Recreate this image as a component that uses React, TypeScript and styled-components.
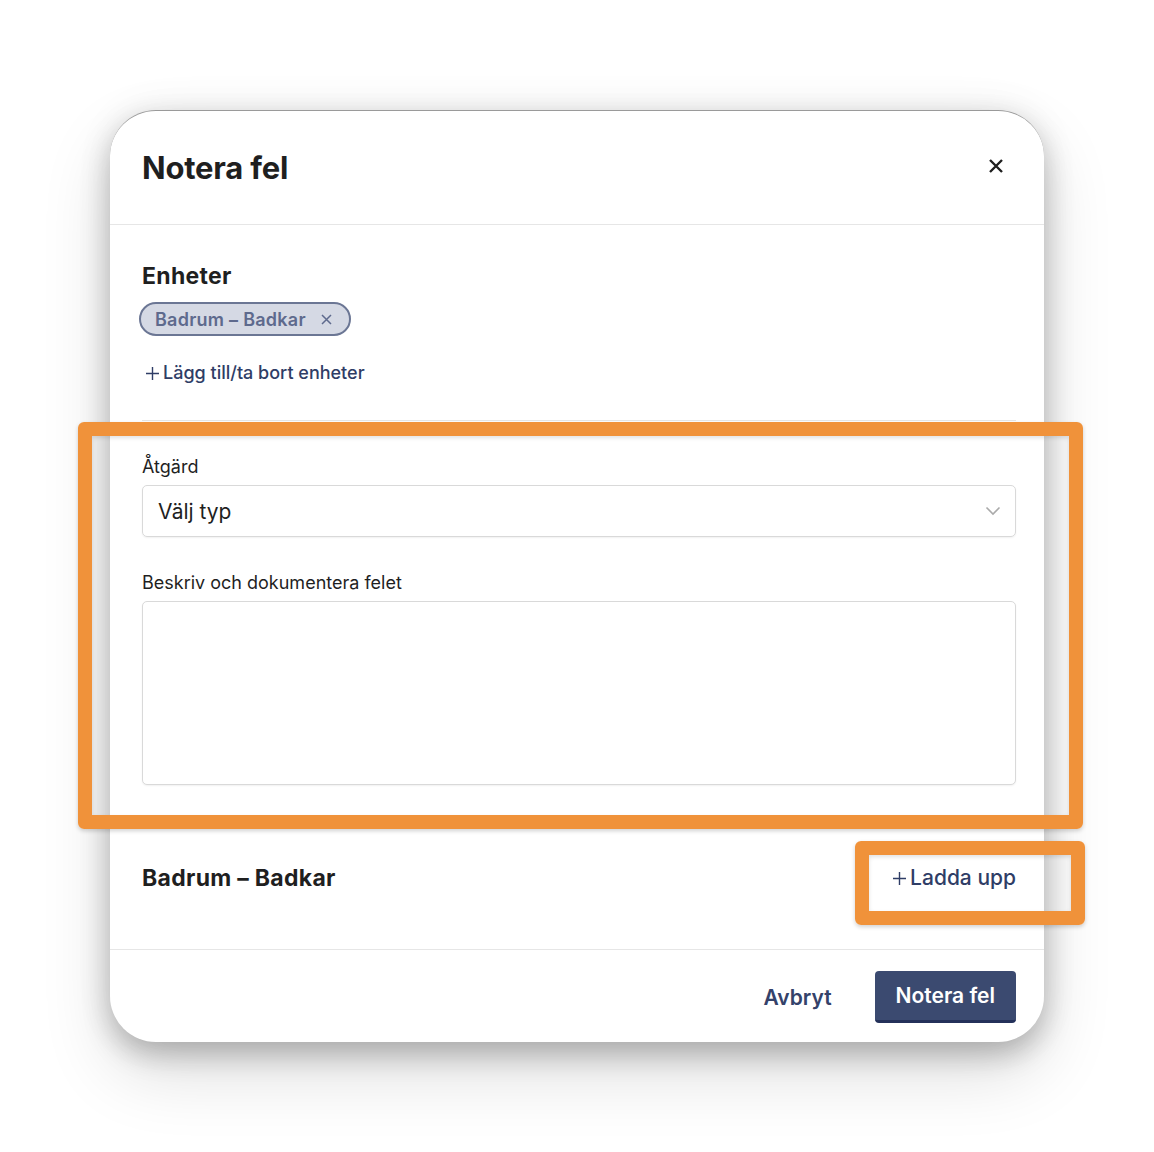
import React from "react";
import styled, { createGlobalStyle } from "styled-components";

const colors = {
  ink: "#1f1f1f",
  navy: "#2f3d66",
  button: "#3b4a70",
  buttonEdge: "#24315a",
  line: "#e6e6e6",
  field: "#d9d9d9",
  orange: "#f0923a",
  chipBg: "#d5d9e4",
  chipInk: "#5e6a8d",
};

const GlobalStyle = createGlobalStyle`
  html, body {
    margin: 0;
    padding: 0;
    background: #ffffff;
  }

  body {
    font-family: Inter, "Noto Sans", "Liberation Sans", sans-serif;
    color: ${colors.ink};
  }

  * {
    box-sizing: border-box;
  }
`;

const Page = styled.div`
  width: 1154px;
  height: 1152px;
  padding: 110px 0 0 110px;
`;

const Modal = styled.div`
  position: relative;
  width: 934px;
  height: 932px;
  background: #ffffff;
  border-top: 1px solid #9a9a9a;
  border-radius: 46px;
  box-shadow: 0 12px 28px rgba(0, 0, 0, 0.22), 0 30px 70px rgba(0, 0, 0, 0.14),
    0 0 40px rgba(0, 0, 0, 0.06);
  display: flex;
  flex-direction: column;
`;

const Header = styled.header`
  display: flex;
  align-items: center;
  justify-content: space-between;
  height: 114px;
  padding: 0 36px 0 32px;
  border-bottom: 1px solid ${colors.line};
`;

const Title = styled.h1`
  margin: 0;
  font-size: 31px;
  line-height: 40px;
  font-weight: 700;
  letter-spacing: -0.2px;
`;

const CloseButton = styled.button`
  display: flex;
  align-items: center;
  justify-content: center;
  width: 24px;
  height: 24px;
  margin-bottom: 4px;
  padding: 0;
  border: none;
  background: transparent;
  color: ${colors.ink};
`;

const Body = styled.div`
  flex: 1;
  padding: 36px 28px 0 32px;
  display: flex;
  flex-direction: column;
`;

const SectionTitle = styled.h2`
  margin: 0;
  font-size: 23px;
  line-height: 30px;
  font-weight: 700;
  letter-spacing: 0.3px;
`;

const ChipRow = styled.div`
  display: flex;
  margin: 11px 0 0 -3px;
`;

const Chip = styled.span`
  display: inline-flex;
  align-items: center;
  gap: 15px;
  height: 34px;
  padding: 0 17px 0 14px;
  border: 2px solid #6b7694;
  border-radius: 17px;
  background: ${colors.chipBg};
  color: ${colors.chipInk};
  font-size: 18px;
  font-weight: 600;
  letter-spacing: 0.25px;
`;

const TextLink = styled.a<{ $size?: number }>`
  display: inline-flex;
  align-items: center;
  gap: 3px;
  color: ${colors.navy};
  font-size: ${(p) => p.$size ?? 18}px;
  font-weight: 500;
  line-height: 24px;
  text-decoration: none;
  cursor: pointer;
`;

const LinkRow = styled.div`
  margin: 25px 0 0 3px;
`;

const Divider = styled.hr`
  margin: 35px 0 0;
  border: none;
  border-top: 1px solid ${colors.line};
`;

const Label = styled.label<{ $top: number }>`
  display: block;
  margin-top: ${(p) => p.$top}px;
  font-size: 18px;
  line-height: 24px;
  color: ${colors.ink};
`;

const Select = styled.div`
  display: flex;
  align-items: center;
  justify-content: space-between;
  margin-top: 6px;
  height: 52px;
  padding: 0 14px 0 15px;
  border: 1px solid ${colors.field};
  border-radius: 5px;
  box-shadow: 0 1px 2px rgba(0, 0, 0, 0.06);
  font-size: 21px;
  color: ${colors.ink};
`;

const TextArea = styled.textarea`
  display: block;
  width: 100%;
  height: 184px;
  margin-top: 6px;
  border: 1px solid ${colors.field};
  border-radius: 5px;
  box-shadow: 0 1px 2px rgba(0, 0, 0, 0.06);
  resize: none;
  font-family: inherit;
`;

const UploadRow = styled.div`
  display: flex;
  align-items: center;
  justify-content: space-between;
  margin-top: 78px;
`;

const Footer = styled.footer`
  display: flex;
  justify-content: flex-end;
  align-items: center;
  gap: 43px;
  height: 93px;
  padding: 2px 28px 0 32px;
  border-top: 1px solid ${colors.line};
`;

const GhostButton = styled.button`
  border: none;
  background: transparent;
  padding: 0;
  font-family: inherit;
  font-size: 21px;
  font-weight: 600;
  color: #34426a;
`;

const PrimaryButton = styled.button`
  height: 52px;
  padding: 0 21px;
  border: none;
  border-bottom: 3px solid ${colors.buttonEdge};
  border-radius: 4px;
  background: ${colors.button};
  color: #ffffff;
  font-family: inherit;
  font-size: 21px;
  font-weight: 600;
`;

// annotation frames drawn over the dialog
const Highlight = styled.div<{ $x: number; $y: number; $w: number; $h: number }>`
  position: absolute;
  left: ${(p) => p.$x}px;
  top: ${(p) => p.$y}px;
  width: ${(p) => p.$w}px;
  height: ${(p) => p.$h}px;
  border: 14px solid ${colors.orange};
  border-radius: 6px;
  box-shadow: 0 2px 4px rgba(0, 0, 0, 0.18), inset 0 2px 4px rgba(0, 0, 0, 0.12);
  pointer-events: none;
`;

const PlusIcon = () => (
  <svg width="15" height="15" viewBox="0 0 15 15" fill="none">
    <path d="M7.5 1v13M1 7.5h13" stroke="currentColor" strokeWidth="1.4" />
  </svg>
);

export default function App() {
  return (
    <>
      <GlobalStyle />
      <Page>
        <Modal>
          <Header>
            <Title>Notera fel</Title>
            <CloseButton>
              <svg width="16" height="16" viewBox="0 0 16 16" fill="none">
                <path d="M2 2l12 12M14 2L2 14" stroke="currentColor" strokeWidth="2.4" />
              </svg>
            </CloseButton>
          </Header>
          <Body>
            <SectionTitle>Enheter</SectionTitle>
            <ChipRow>
              <Chip>
                Badrum – Badkar
                <svg width="11" height="11" viewBox="0 0 11 11" fill="none">
                  <path d="M1 1l9 9M10 1l-9 9" stroke="currentColor" strokeWidth="1.5" />
                </svg>
              </Chip>
            </ChipRow>
            <LinkRow>
              <TextLink>
                <PlusIcon />
                Lägg till/ta bort enheter
              </TextLink>
            </LinkRow>
            <Divider />
            <Label $top={34}>Åtgärd</Label>
            <Select>
              Välj typ
              <svg width="16" height="10" viewBox="0 0 16 10" fill="none">
                <path d="M1.5 1.5l6.5 6.5 6.5-6.5" stroke="#aaaaaa" strokeWidth="1.6" />
              </svg>
            </Select>
            <Label $top={34}>Beskriv och dokumentera felet</Label>
            <TextArea />
            <UploadRow>
              <SectionTitle>Badrum – Badkar</SectionTitle>
              <TextLink $size={21}>
                <PlusIcon />
                Ladda upp
              </TextLink>
            </UploadRow>
          </Body>
          <Footer>
            <GhostButton>Avbryt</GhostButton>
            <PrimaryButton>Notera fel</PrimaryButton>
          </Footer>
          <Highlight $x={-32} $y={311} $w={1005} $h={407} />
          <Highlight $x={745} $y={730} $w={230} $h={84} />
        </Modal>
      </Page>
    </>
  );
}
